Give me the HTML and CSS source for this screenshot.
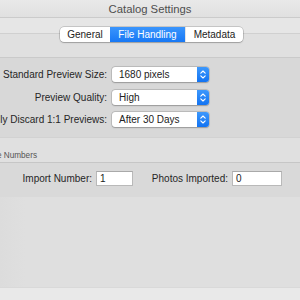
FILE: index.html
```html
<!DOCTYPE html>
<html>
<head>
<meta charset="utf-8">
<link rel="stylesheet" href="styles.css">
</head>
<body>
<div class="window">
  <header class="titlebar">Catalog Settings</header>
  <nav class="toolbar">
    <div class="tabs">
      <span class="tab tab-general">General</span>
      <span class="tab tab-file active">File Handling</span>
      <span class="tab tab-meta">Metadata</span>
    </div>
  </nav>
  <section class="group preview">
    <div class="lbl"><span>Standard Preview Size:</span></div>
    <div class="popup"><span class="val">1680 pixels</span><span class="stepper"><svg viewBox="0 0 12 15" width="12" height="15"><path d="M3.8 6.2 L6 4 L8.2 6.2 M3.8 8.8 L6 11 L8.2 8.8" fill="none" stroke="#fff" stroke-width="1.1" stroke-linecap="round" stroke-linejoin="round"/></svg></span></div>
    <div class="lbl"><span>Preview Quality:</span></div>
    <div class="popup"><span class="val">High</span><span class="stepper"><svg viewBox="0 0 12 15" width="12" height="15"><path d="M3.8 6.2 L6 4 L8.2 6.2 M3.8 8.8 L6 11 L8.2 8.8" fill="none" stroke="#fff" stroke-width="1.1" stroke-linecap="round" stroke-linejoin="round"/></svg></span></div>
    <div class="lbl"><span>Automatically Discard 1:1 Previews:</span></div>
    <div class="popup"><span class="val">After 30 Days</span><span class="stepper"><svg viewBox="0 0 12 15" width="12" height="15"><path d="M3.8 6.2 L6 4 L8.2 6.2 M3.8 8.8 L6 11 L8.2 8.8" fill="none" stroke="#fff" stroke-width="1.1" stroke-linecap="round" stroke-linejoin="round"/></svg></span></div>
  </section>
  <div class="group-title"><div class="gt-inner"><span>Sequence Numbers</span></div></div>
  <section class="group seq">
    <div class="lbl"><span>Import Number:</span></div>
    <div class="input">1</div>
    <div class="lbl"><span>Photos Imported:</span></div>
    <div class="input">0</div>
  </section>
  <div class="blank"></div>
  <footer class="footer"></footer>
</div>
</body>
</html>
```
FILE: styles.css
```css
html, body {
  margin: 0;
  padding: 0;
}
body {
  width: 300px;
  height: 300px;
  overflow: hidden;
  font-family: "Liberation Sans", Arial, sans-serif;
  color: #262626;
  background: #e0e0e0;
}
.window {
  display: flex;
  flex-direction: column;
  height: 300px;
}
.titlebar {
  height: 17px;
  line-height: 18px;
  text-align: center;
  font-size: 11.3px;
  color: #4e4e4e;
  background: linear-gradient(#e9e9e9, #e0e0e0);
  border-bottom: 1px solid #cbcbcb;
}
.toolbar {
  height: 39px;
  border-bottom: 1px solid #cacaca;
  background: linear-gradient(#e6e6e6 0 15px, #d0d0d0 15px 16px, #e0e0e0 16px);
  display: flex;
  justify-content: flex-start;
  align-items: flex-start;
  padding-left: 60px;
}
.tabs {
  margin-top: 9px;
  display: flex;
  height: 15px;
  background: #fff;
  border-radius: 4px;
  box-shadow: 0 0 0 0.5px rgba(0,0,0,0.28), 0 1px 1.5px rgba(0,0,0,0.18);
  overflow: hidden;
}
.tab {
  font-size: 10px;
  line-height: 15px;
  text-align: center;
  color: #222;
}
.tab-general { width: 50px; }
.tab-file { width: 75px; }
.tab-meta { width: 58px; border-left: 1px solid #e4e4e4; width: 57px; }
.tab.active {
  color: #fff;
  background: linear-gradient(#3a95fc, #1778f5);
}
.group {
  display: grid;
  align-items: center;
}
.preview {
  height: 79px;
  box-sizing: border-box;
  padding-top: 9px;
  background: #d8d8d8;
  grid-template-columns: 107px 97px;
  grid-auto-rows: 15px;
  column-gap: 5px;
  row-gap: 7.5px;
  align-content: start;
}
.lbl {
  display: flex;
  justify-content: flex-end;
  white-space: nowrap;
  font-size: 10px;
  color: #262626;
}
.popup {
  height: 15px;
  display: flex;
  align-items: center;
  background: #fff;
  border-radius: 3px;
  box-shadow: 0 0 0 0.5px rgba(0,0,0,0.2), 0 0.5px 1.5px rgba(0,0,0,0.22);
  font-size: 10px;
  color: #222;
}
.val {
  flex: 1;
  padding-left: 7px;
}
.stepper {
  width: 12px;
  height: 15px;
  border-radius: 0 3px 3px 0;
  background: linear-gradient(#3d98fc, #1273f2);
  display: flex;
}
.group-title {
  height: 24px;
  border-top: 1px solid #d2d2d2;
  border-bottom: 1px solid #c6c6c6;
  background: #e0e0e0;
}
.gt-inner {
  width: 37px;
  height: 24px;
  display: flex;
  justify-content: flex-end;
  align-items: flex-end;
  white-space: nowrap;
  font-size: 8.2px;
  color: #555;
  line-height: 10px;
  padding-bottom: 1px;
  box-sizing: border-box;
}
.seq {
  height: 34px;
  box-sizing: border-box;
  padding-top: 8px;
  background: #d9d9d9;
  grid-template-columns: 92px 37px 91px 50px;
  grid-template-rows: 15px;
  column-gap: 4px;
  align-content: start;
}
.input {
  height: 15px;
  box-sizing: border-box;
  background: #fff;
  border: 1px solid #b9b9b9;
  border-top-color: #a9a9a9;
  font-size: 10px;
  line-height: 13px;
  padding-left: 3px;
  color: #222;
}
.blank {
  flex: 1;
  background: linear-gradient(90deg, #dcdcdc 0, #dfdfdf 25px);
}
.footer {
  height: 12px;
  border-top: 1px solid #d9d9d9;
  background: #e9e9e9;
}
```
